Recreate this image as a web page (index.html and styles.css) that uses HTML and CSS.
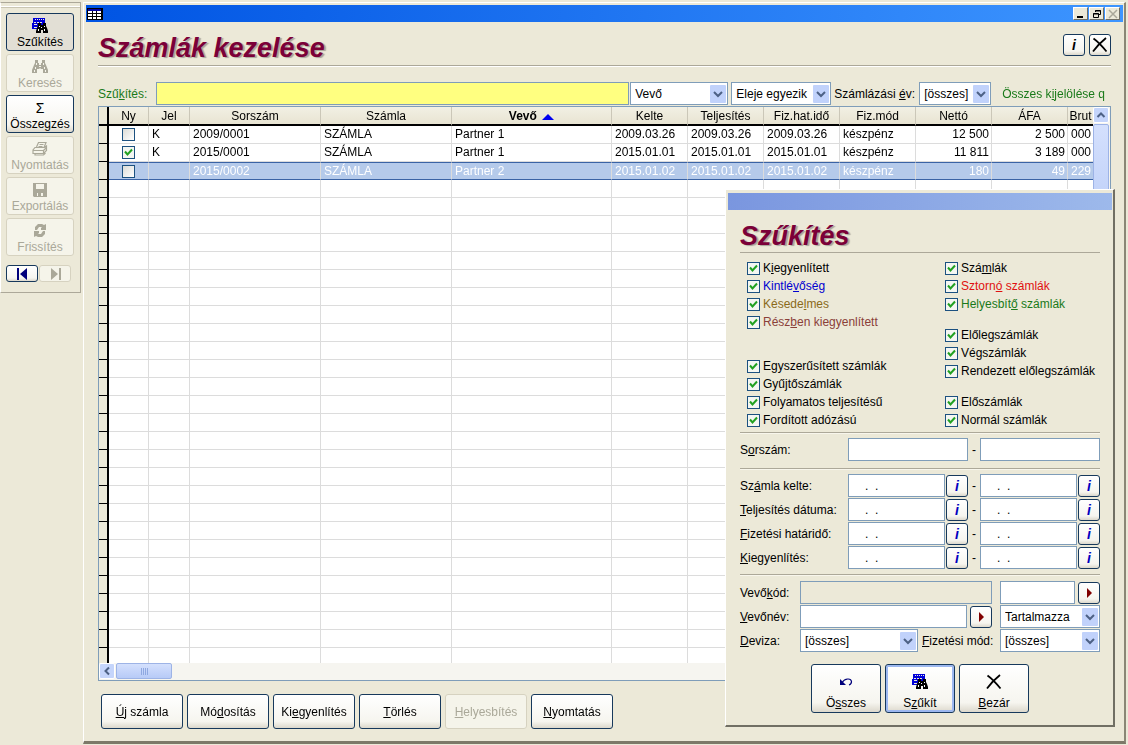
FILE: index.html
```html
<!DOCTYPE html>
<html lang="hu">
<head>
<meta charset="utf-8">
<title>Számlák kezelése</title>
<link rel="stylesheet" href="styles.css">
</head>
<body>
<svg class="defs" aria-hidden="true">
  <symbol id="filter" viewBox="0 0 16 16">
    <path fill="#0000d8" d="M1 0h12v5h-1v6H0V5h1z"/>
    <path fill="#ece9d8" d="M3 1h1v1H3zM5 1h1v1H5zM7 1h1v1H7zM9 1h1v1H9zM11 1h1v1h-1zM2 4h2v1H2zM5 4h2v1H5zM8 4h2v1H8zM2 6h3v1H2zM2 9h3v1H2z"/>
    <path fill="#000" d="M6 5h3v2h2V5h3v3l1 2 1 3v2h-5v-3H9v3H4v-2l1-3 1-2z"/>
    <path fill="#fff" d="M7 8h1v1H7zM6 11h1v2H6zM12 8h1v1h-1zM12 11h1v2h-1zM9 9h1v1H9z"/>
  </symbol>
  <symbol id="bino" viewBox="0 0 16 16">
    <path fill="#aaa899" d="M3 1h3v3h1v2h2V4h1V1h3v3l1 2 2 5v3h-5v-4H9L8 9 7 10H5v4H0v-3l2-5 1-2z"/>
    <path fill="#f5f4ea" d="M4 4h1v2H4zM11 4h1v2h-1zM3 8h1v2H3zM2 11h1v2H2zM12 8h1v2h-1zM13 11h1v2h-1zM7 7h2v1H7z"/>
  </symbol>
  <symbol id="printer" viewBox="0 0 16 16">
    <path fill="none" stroke="#aaa899" stroke-width="1.200" d="M4.500 6l2-4.500h7.500l-2 5M7.500 3.500h4M6.500 5.500h4M3 6.500h9.500l2-1.500v4.500l-3 3H1V9zM1 9.500h10.500v3M11.500 9.500l3-3M3 12.500V14h8.500l2-2"/>
  </symbol>
  <symbol id="disk" viewBox="0 0 16 16">
    <path fill="#aaa899" d="M1 1h14v14H2l-1-1z"/>
    <path fill="#f5f4ea" d="M4 2h8v5H4zM5 11h6v3H5z"/>
    <path fill="#aaa899" d="M6 11h3v3H6z"/>
  </symbol>
  <symbol id="refresh" viewBox="0 0 16 16">
    <path fill="#aaa899" d="M3 7V4l3-3h4l2 1 2-1v6H9V5l1-1H7L5 7zM13 8v3l-3 3H6l-2-1-2 1V8h5v2l-1 1h3l2-3z"/>
  </symbol>
  <symbol id="cross" viewBox="0 0 16 16">
    <path fill="none" stroke="#000" stroke-width="1.800" d="M1.500 1.500C5 4 10 9 14.500 14.500M14 1C9 5 5 9 1 14.500"/>
  </symbol>
  <symbol id="undo" viewBox="0 0 16 16">
    <path fill="none" stroke="#00007b" stroke-width="1.200" d="M4 8.500C7 4 13 4 13.500 7.500c0 2-1 3-2.500 3.500"/>
    <path fill="#00007b" d="M2 5v6h6z"/>
  </symbol>
  <symbol id="tri" viewBox="0 0 16 16"><path fill="#800000" d="M6 3v10l5-5z"/></symbol>
</svg>

<aside class="sidebar">
  <button class="btn tool active"><svg class="ico"><use href="#filter"/></svg>Szűkítés</button>
  <button class="btn tool" disabled><svg class="ico"><use href="#bino"/></svg>Keresés</button>
  <button class="btn tool"><span class="ico sigma">Σ</span>Összegzés</button>
  <button class="btn tool" disabled><svg class="ico"><use href="#printer"/></svg>Nyomtatás</button>
  <button class="btn tool" disabled><svg class="ico"><use href="#disk"/></svg>Exportálás</button>
  <button class="btn tool" disabled><svg class="ico"><use href="#refresh"/></svg>Frissítés</button>
  <div class="pager">
    <button class="btn" aria-label="Első"><svg viewBox="0 0 16 12"><path fill="#00007b" d="M3 0h2v12H3zM13 0v12L6 6z"/></svg></button>
    <button class="btn" aria-label="Utolsó" disabled><svg viewBox="0 0 16 12"><path fill="#aaa899" d="M12 0h2v12h-2zM4 0v12l7-6z"/></svg></button>
  </div>
</aside>

<main class="window">
  <div class="titlebar">
    <svg class="appicon" viewBox="0 0 16 12"><path fill="#000" d="M0 0h16v12H0z"/><path fill="#0000a0" d="M1 1h13v2H1z"/><path fill="#fff" d="M1 3h13v8H1z"/><path stroke="#000" d="M1 5.500h13M1 8.500h13M5.500 3v8M9.500 3v8"/></svg>
    <div class="winbtns">
      <button aria-label="Kis méret"><svg viewBox="0 0 12 10"><path fill="#000" d="M2 7h6v2H2z"/></svg></button>
      <button aria-label="Visszaállítás"><svg viewBox="0 0 12 10"><path fill="none" stroke="#000" d="M4.500 3V1.500h5v4H8M2.500 4.500h5v4h-5zM4 2h6M2 5h6"/></svg></button>
      <button aria-label="Bezárás" disabled><svg viewBox="0 0 12 10"><path stroke="#aaa899" stroke-width="1.500" d="M2 1l8 8M10 1L2 9"/></svg></button>
    </div>
  </div>
  <div class="content">
    <header class="head">
      <h1>Számlák kezelése</h1>
      <button class="btn sq info dark" aria-label="Információ">i</button>
      <button class="btn sq" aria-label="Bezár"><svg class="ico"><use href="#cross"/></svg></button>
    </header>
    <div class="filter">
      <label class="green lead" for="q">Szű<u>k</u>ítés:</label>
      <input id="q" class="search" type="text" autofocus>
      <select class="w98" aria-label="Mező"><option>Vevő</option></select>
      <select class="w100" aria-label="Egyezés"><option>Eleje egyezik</option></select>
      <label class="w82" for="year">Számlázási <u>é</u>v:</label>
      <select id="year" class="w72"><option>[összes]</option></select>
      <a class="green all" href="#">Összes k<u>i</u>jelölése q</a>
    </div>
    <section class="grid">
      <div class="rows">
        <table>
          <colgroup><col class="c-g"><col class="c-ny"><col class="c-jel"><col class="c-s"><col class="c-s"><col><col class="c-d"><col class="c-d"><col class="c-d"><col class="c-d"><col class="c-d"><col class="c-d"><col class="c-b"></colgroup>
          <thead><tr><th></th><th>Ny</th><th>Jel</th><th>Sorszám</th><th>Számla</th><th class="sorted">Vevő <svg viewBox="0 0 12 6"><path fill="#0000f0" d="M6 0l6 6H0z"/></svg></th><th>Kelte</th><th>Teljesítés</th><th>Fiz.hat.idő</th><th>Fiz.mód</th><th>Nettó</th><th>ÁFA</th><th class="cut">Brut</th></tr></thead>
          <tbody id="rows">
            <tr><td></td><td class="ck"><input type="checkbox" aria-label="Kijelölés 1"></td><td>K</td><td>2009/0001</td><td>SZÁMLA</td><td>Partner 1</td><td>2009.03.26</td><td>2009.03.26</td><td>2009.03.26</td><td>készpénz</td><td class="n">12 500</td><td class="n">2 500</td><td class="n">000</td></tr>
            <tr><td></td><td class="ck"><input type="checkbox" aria-label="Kijelölés 2" checked></td><td>K</td><td>2015/0001</td><td>SZÁMLA</td><td>Partner 1</td><td>2015.01.01</td><td>2015.01.01</td><td>2015.01.01</td><td>készpénz</td><td class="n">11 811</td><td class="n">3 189</td><td class="n">000</td></tr>
            <tr class="sel"><td></td><td class="ck"><input type="checkbox" aria-label="Kijelölés 3"></td><td></td><td>2015/0002</td><td>SZÁMLA</td><td>Partner 2</td><td>2015.01.02</td><td>2015.01.02</td><td>2015.01.02</td><td>készpénz</td><td class="n">180</td><td class="n">49</td><td class="n">229</td></tr>
          </tbody>
        </table>
      </div>
      <div class="vscroll"><button aria-label="Fel"><svg viewBox="0 0 10 10"><path fill="none" stroke="#4d6185" stroke-width="2" d="M1.500 7L5 3.500 8.500 7"/></svg></button><span class="thumb"></span></div>
      <div class="hscroll"><button aria-label="Balra"><svg viewBox="0 0 10 10"><path fill="none" stroke="#4d6185" stroke-width="2" d="M7 1.500L3.500 5 7 8.500"/></svg></button><span class="thumb"><i></i><i></i><i></i><i></i></span></div>
    </section>
    <footer class="actions">
      <button class="btn"><span><u>Ú</u>j számla</span></button>
      <button class="btn"><span>Mó<u>d</u>osítás</span></button>
      <button class="btn"><span>Ki<u>e</u>gyenlítés</span></button>
      <button class="btn"><span><u>T</u>örlés</span></button>
      <button class="btn" disabled><span><u>H</u>elyesbítés</span></button>
      <button class="btn"><span><u>N</u>yomtatás</span></button>
    </footer>
  </div>
</main>

<section class="dialog" role="dialog" aria-labelledby="dlg">
  <div class="dlgbar"></div>
  <form class="dlgbody">
    <h2 id="dlg">Szűkítés</h2>
    <div class="checks">
      <div class="col">
        <div class="group">
          <label><input type="checkbox" checked><span>K<u>i</u>egyenlített</span></label>
          <label class="blue"><input type="checkbox" checked><span>Kintlé<u>v</u>őség</span></label>
          <label class="olive"><input type="checkbox" checked><span>Késede<u>l</u>mes</span></label>
          <label class="brown"><input type="checkbox" checked><span>Rész<u>b</u>en kiegyenlített</span></label>
        </div>
        <div class="group">
          <label><input type="checkbox" checked><span>Egyszerűsített számlák</span></label>
          <label><input type="checkbox" checked><span>Gyűjtőszámlák</span></label>
          <label><input type="checkbox" checked><span>Folyamatos teljesítésű</span></label>
          <label><input type="checkbox" checked><span>Fordított adózású</span></label>
        </div>
      </div>
      <div class="col">
        <div class="group">
          <label><input type="checkbox" checked><span>Szá<u>m</u>lák</span></label>
          <label class="red"><input type="checkbox" checked><span>Sztorn<u>ó</u> számlák</span></label>
          <label class="green"><input type="checkbox" checked><span>Helyesbít<u>ő</u> számlák</span></label>
        </div>
        <div class="group">
          <label><input type="checkbox" checked><span>Előlegszámlák</span></label>
          <label><input type="checkbox" checked><span>Végszámlák</span></label>
          <label><input type="checkbox" checked><span>Rendezett előlegszámlák</span></label>
        </div>
        <div class="group">
          <label><input type="checkbox" checked><span>Előszámlák</span></label>
          <label><input type="checkbox" checked><span>Normál számlák</span></label>
        </div>
      </div>
    </div>
    <div class="block serial">
      <label for="s1">S<u>o</u>rszám:</label><input id="s1" type="text"><span class="dash">-</span><input type="text" aria-label="Sorszám vége">
    </div>
    <div class="block dates">
      <label for="d1">Sz<u>á</u>mla kelte:</label><input id="d1" type="text" value=".  ."><button type="button" class="btn sq info">i</button><span class="dash">-</span><input type="text" value=".  ." aria-label="Számla kelte vége"><button type="button" class="btn sq info">i</button>
      <label for="d2"><u>T</u>eljesítés dátuma:</label><input id="d2" type="text" value=".  ."><button type="button" class="btn sq info">i</button><span class="dash">-</span><input type="text" value=".  ." aria-label="Teljesítés vége"><button type="button" class="btn sq info">i</button>
      <label for="d3"><u>F</u>izetési határidő:</label><input id="d3" type="text" value=".  ."><button type="button" class="btn sq info">i</button><span class="dash">-</span><input type="text" value=".  ." aria-label="Határidő vége"><button type="button" class="btn sq info">i</button>
      <label for="d4"><u>K</u>iegyenlítés:</label><input id="d4" type="text" value=".  ."><button type="button" class="btn sq info">i</button><span class="dash">-</span><input type="text" value=".  ." aria-label="Kiegyenlítés vége"><button type="button" class="btn sq info">i</button>
    </div>
    <div class="block buyer">
      <label for="b1">Vevő<u>k</u>ód:</label>
      <input id="b1" type="text" disabled>
      <div class="pair"><input type="text" aria-label="Vevőkód"><button type="button" class="btn sq" aria-label="Keres"><svg class="ico"><use href="#tri"/></svg></button></div>
      <label for="b2"><u>V</u>evőnév:</label>
      <div class="pair"><input id="b2" type="text"><button type="button" class="btn sq" aria-label="Keres"><svg class="ico"><use href="#tri"/></svg></button></div>
      <select aria-label="Egyezés módja"><option>Tartalmazza</option></select>
      <label for="b3"><u>D</u>eviza:</label>
      <div class="pair currency"><select id="b3"><option>[összes]</option></select><label for="b4"><u>F</u>izetési mód:</label></div>
      <select id="b4"><option>[összes]</option></select>
    </div>
    <div class="dlgbtns">
      <button type="button" class="btn"><svg class="ico"><use href="#undo"/></svg><span>Ö<u>s</u>szes</span></button>
      <button type="button" class="btn default"><svg class="ico"><use href="#filter"/></svg><span>S<u>z</u>űkít</span></button>
      <button type="button" class="btn"><svg class="ico"><use href="#cross"/></svg><span><u>B</u>ezár</span></button>
    </div>
  </form>
</section>
<script src="app.js"></script>
</body>
</html>
```
FILE: app.js
```js
// Pad the grid with empty rows so that its lines run to the bottom.
const body = document.getElementById('rows');
for (let r = 0; r < 60; r++) {
  const row = body.insertRow();
  for (let c = 0; c < 13; c++) row.insertCell();
}
document.getElementById('q').focus();
```
FILE: styles.css
```css
* { box-sizing: border-box; }
body {
  margin: 0;
  height: 100vh;
  overflow: hidden;
  display: flex;
  align-items: flex-start;
  gap: 2px;
  padding: 2px 2px 1px 0;
  background: #ece9d8;
  color: #000;
  font: 12px/16px "Liberation Sans", Arial, sans-serif;
  position: relative;
}
button, input, select { font: inherit; color: inherit; margin: 0; }
u { text-underline-offset: 1px; }
.defs { position: absolute; width: 0; height: 0; }
.ico { width: 16px; height: 16px; flex: none; }

.green { color: #1a7a1a; }
.blue { color: #0000d0; }
.olive { color: #8a6a1a; }
.brown { color: #8a4038; }
.red { color: #e01010; }

/* Buttons */
.btn {
  display: flex;
  align-items: center;
  justify-content: center;
  padding: 0;
  border: 1px solid #17395c;
  border-radius: 3px;
  background: linear-gradient(#fff, #f6f5ef 80%, #dcd8cc);
}
.btn:disabled {
  border-color: #d6d2c0;
  background: #f5f4ea;
  color: #aaa899;
}
.btn.active { background: #e2dfd5; }
.sq { width: 22px; height: 22px; }
.info { font-weight: bold; font-style: italic; font-size: 14px; color: #0000c0; }
.info.dark { color: #000; }

/* Fields */
input[type="text"], select {
  height: 23px;
  min-width: 0;
  border: 1px solid #7f9db9;
  border-radius: 0;
  background: #fff;
  padding: 0 4px;
  outline: none;
}
input[type="text"]:disabled { background: #ece9d8; }
select {
  appearance: none;
  background: #fff url("data:image/svg+xml,%3Csvg xmlns='http://www.w3.org/2000/svg' width='16' height='18'%3E%3Crect width='16' height='18' rx='1' fill='%23c1d2fb'/%3E%3Cpath d='M4 7l4 4 4-4' fill='none' stroke='%234d6185' stroke-width='2'/%3E%3C/svg%3E") no-repeat right 1px center;
}
input[type="checkbox"] {
  appearance: none;
  width: 13px;
  height: 13px;
  margin: 0;
  flex: none;
  border: 1px solid #1c5180;
  background: linear-gradient(135deg, #dcdcd7, #fff);
}
input[type="checkbox"]:checked {
  background: #f4f6f2 url("data:image/svg+xml,%3Csvg xmlns='http://www.w3.org/2000/svg' width='11' height='11'%3E%3Cpath d='M2 4.500l2.500 3 4.500-5' fill='none' stroke='%2321a121' stroke-width='2'/%3E%3C/svg%3E") no-repeat center;
}

/* Sidebar */
.sidebar {
  width: 81px;
  flex: none;
  display: flex;
  flex-direction: column;
  align-items: flex-start;
  gap: 3px;
  padding: 10px 5px;
  border: 1px solid #aca899;
  border-left-color: #fff;
  box-shadow: inset 0 3px #ece9d8, inset 0 4px #fff, inset 0 5px #c9c5b2;
}
.tool {
  flex-direction: column;
  height: 38px;
  width: 68px;
}
.tool .ico { margin-top: 3px; }
.sigma { font-size: 14px; line-height: 16px; }
.pager { display: flex; gap: 1px; padding-top: 6px; }
.pager .btn { width: 32px; height: 17px; }
.pager svg { width: 16px; height: 12px; }

/* Main window */
.window {
  flex: 1;
  min-width: 0;
  height: 100%;
  display: flex;
  flex-direction: column;
  padding: 2px 1px 0 2px;
  border: 1px solid #fff;
  border-right: 2px solid #8a8776;
  border-bottom: 3px solid #7c7968;
}
.titlebar {
  display: flex;
  align-items: center;
  justify-content: space-between;
  height: 17px;
  padding: 0 3px 0 1px;
  background: linear-gradient(90deg, #0054e3, #3d95ff);
}
.appicon { width: 16px; height: 12px; }
.winbtns { display: flex; gap: 1px; }
.winbtns button {
  display: flex;
  align-items: center;
  justify-content: center;
  width: 15px;
  height: 13px;
  padding: 0;
  border: 1px solid;
  border-color: #fff #716f64 #716f64 #fff;
  background: #ece9d8;
}
.winbtns svg { width: 12px; height: 10px; }
.content {
  flex: 1;
  min-height: 0;
  display: flex;
  flex-direction: column;
  padding: 11px 12px 12px;
}
h1, h2 {
  margin: 0;
  font-size: 27px;
  line-height: 30px;
  font-style: italic;
  color: #7b0038;
  text-shadow: 2px 1px 1px #a8a39a;
}
.head {
  display: flex;
  align-items: flex-start;
  gap: 4px;
  height: 33px;
  border-bottom: 1px solid #aca899;
  box-shadow: 0 1px #fff;
}
h1 { flex: 1; }
.head .sq { margin-top: 1px; }
.filter {
  display: flex;
  align-items: center;
  gap: 3px;
  padding: 16px 6px 1px 0;
  white-space: nowrap;
}
.lead { width: 55px; }
.filter .search { flex: 1; background: #ffff80; margin-right: -2px; }
.w82 { width: 82px; }
.w98 { width: 98px; }
.w100 { width: 100px; }
.w72 { width: 72px; }
.all { text-decoration: none; margin-left: 8px; }

/* Invoice grid */
.grid {
  flex: 1;
  min-height: 0;
  display: grid;
  grid-template: minmax(0, 1fr) 17px / minmax(0, 1fr) 17px;
  border: 1px solid #7f9db9;
  background: #fff;
}
.rows { overflow: hidden; }
table { width: 100%; table-layout: fixed; border-collapse: separate; border-spacing: 0; }
.c-g { width: 10px; }
.c-ny { width: 40px; }
.c-jel { width: 41px; }
.c-s { width: 131px; }
.c-d { width: 76px; }
.c-b { width: 25px; }
th {
  height: 19px;
  padding: 0;
  font-weight: normal;
  background: linear-gradient(#f2f0e4, #e8e4d2);
  border-right: 1px solid #cbc7b8;
  border-bottom: 2px solid #000;
  overflow: hidden;
  white-space: nowrap;
}
th.sorted { font-weight: bold; }
.sorted svg { width: 12px; height: 6px; margin-left: 2px; }
td {
  height: 18px;
  padding: 0 2px 0 3px;
  line-height: 17px;
  white-space: nowrap;
  border-right: 1px solid #dcdcdc;
  border-bottom: 1px solid #dcdcdc;
  overflow: hidden;
}
th:last-child, td:last-child { border-right: 0; }
th:first-child, td:first-child { border-right: 2px solid #000; background: #ece9d8; }
td:first-child { border-bottom: 1px solid #000; }
td.ck { padding: 0; }
.ck input { display: block; margin: 0 auto; }
td.n { text-align: right; padding-left: 0; }
.sel td:not(:first-child) {
  background: #b5caea;
  color: #fff;
  border-top: 1px solid #3a63a5;
  border-bottom-color: #3a63a5;
  line-height: 16px;
}
.vscroll, .hscroll { display: flex; gap: 1px; background: #f6f5f0; }
.vscroll { flex-direction: column; }
.hscroll { grid-column: 1 / -1; }
.vscroll button, .hscroll button {
  width: 16px;
  height: 16px;
  padding: 2px;
  border: 1px solid #fff;
  border-radius: 2px;
  background: #c5d5fb;
  display: flex;
}
.thumb {
  display: flex;
  align-items: center;
  justify-content: center;
  gap: 1px;
  border: 1px solid #9db3e6;
  border-radius: 2px;
  background: linear-gradient(#d4e0fd, #b7caf7);
}
.vscroll .thumb { height: 120px; width: 16px; }
.hscroll .thumb { width: 56px; height: 16px; }
.thumb i { width: 1px; height: 7px; background: #8fa8e0; }

.actions { display: flex; gap: 4px; padding: 13px 3px 0; }
.actions .btn { width: 82px; height: 35px; }

/* Filter dialog floating over the window */
.dialog {
  position: absolute;
  top: 189px;
  right: 13px;
  width: 390px;
  padding: 3px 1px 0 2px;
  background: #ece9d8;
  border: 1px solid #fff;
  border-right: 2px solid #716f64;
  border-bottom: 2px solid #716f64;
}
.dlgbar { height: 17px; background: linear-gradient(90deg, #7a96df, #9db9eb); }
.dlgbody { padding: 11px 12px 12px; }
h2 {
  padding-bottom: 1px;
  border-bottom: 1px solid #aca899;
}
.checks {
  display: grid;
  grid-template-columns: 198px 1fr;
  padding: 6px 0 3px 7px;
  white-space: nowrap;
}
.col { display: flex; flex-direction: column; justify-content: space-between; gap: 13px; }
.group label { display: flex; align-items: center; gap: 3px; height: 18px; }
.block {
  display: grid;
  align-items: center;
  row-gap: 1px;
  padding: 5px 0 6px;
  border-top: 1px solid #aca899;
  box-shadow: inset 0 1px #f8f6ec;
  white-space: nowrap;
}
.serial { grid-template-columns: 108px 1fr 12px 1fr; padding-bottom: 7px; }
.dates { grid-template-columns: 108px 1fr 23px 12px 1fr 23px; padding-bottom: 5px; }
.dates .btn { margin-left: 1px; }
.dates input { padding-left: 16px; white-space: pre; }
.dash { text-align: center; }
.buyer { grid-template-columns: 60px 1fr 100px; padding: 6px 0 0; }
#b1, .buyer > .pair:nth-of-type(2) { margin-right: 8px; }
.pair { display: flex; align-items: center; gap: 3px; }
.pair input { flex: 1; }
.currency { gap: 4px; }
.currency select { width: 118px; }
.dlgbtns { display: flex; justify-content: center; gap: 4px; padding-top: 12px; }
.dlgbtns .btn {
  flex-direction: column;
  justify-content: space-between;
  width: 70px;
  height: 49px;
  padding: 9px 0 1px;
}
.btn.default { box-shadow: inset 0 0 0 2px #9db8f0; }
```
